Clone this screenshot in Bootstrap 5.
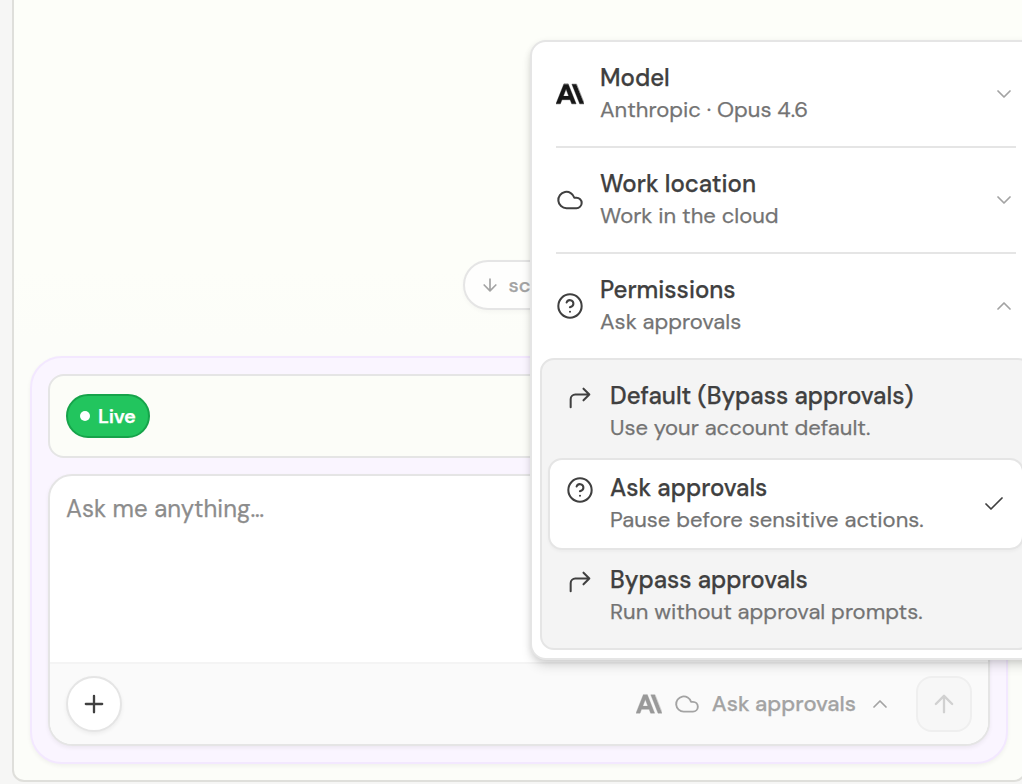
<!DOCTYPE html>
<html lang="en">
<head>
<meta charset="utf-8">
<title>Assistant</title>
<meta name="viewport" content="width=device-width, initial-scale=1">
<link href="https://cdn.jsdelivr.net/npm/bootstrap@5.3.0/dist/css/bootstrap.min.css" rel="stylesheet">
<style>
  body { font-family: "DM Sans", Inter, "Open Sans", sans-serif; background: #f6f6f5; color: #404040; height: 784px; -webkit-text-stroke: .25px currentColor; }
  .ico { fill: none; stroke: currentColor; stroke-width: 1.75; stroke-linecap: round; stroke-linejoin: round; flex: none; display: block; }
  .ico.logo { fill: #171717; stroke: #171717; stroke-width: .35; stroke-linejoin: miter; }
  .ico.logo-dim { fill: #999; stroke: #999; }
  .ico.bold-line { stroke-width: 2; }
  .stage { width: 1040px; height: 784px; padding: 0 14px 2px 12px; }
  .panel { border: 2px solid #dfdfdb; border-top: 0; border-radius: 0 0 12px 12px; background: linear-gradient(#fdfef9 270px, #fcfdf9 340px); padding: 0 16px 16px; }
  .scroll-pill { width: 113px; height: 50px; border: 2px solid #e5e5e5; color: #a3a3a3; padding-left: 15px; gap: 9px; margin-bottom: 46px; font-size: 20px; font-weight: 500; background: #fefefd; box-shadow: 0 2px 4px rgba(0,0,0,.03); }
  .composer { border: 2px solid #f3e8ff; background: #faf5ff; border-radius: 32px; padding: 16px; gap: 16px; box-shadow: 0 2px 4px rgba(0,0,0,.05); }
  .status { height: 84px; border: 2px solid #e5e5e5; border-radius: 16px; background: #fcfdf8; padding: 0 16px; }
  .live { height: 44px; width: 84px; border: 2px solid #16a34a; background: #22c55e; font-size: 20px; font-weight: 600; letter-spacing: -.3px; padding-left: 12px; gap: 8px; }
  .live-dot { width: 10px; height: 10px; }
  .prompt-box { height: 272px; border: 2px solid #e5e5e5; border-radius: 24px; box-shadow: 0 2px 4px rgba(0,0,0,.06); }
  .placeholder-text { font-size: 24px; line-height: 33px; letter-spacing: .04px; color: #8c8c8c; padding: 16px; }
  .toolbar { height: 82px; border-top: 2px solid #f4f4f4; background: #fafafa; padding: 0 16px; color: #a3a3a3; }
  .round-btn { width: 56px; height: 56px; border: 2px solid #e5e5e5; }
  .add-btn { box-shadow: 0 2px 4px rgba(0,0,0,.06); color: #404040; }
  .send-btn { border-radius: 16px; border-color: #efefef; background: #f7f7f7; color: #d1d1d1; margin-left: 24px; }
  .mode { font-size: 22px; font-weight: 500; gap: 12px; }
  .mode-label { padding-bottom: 2px; }
  .menu-pop { left: 530px; top: 40px; width: 512px; height: 620px; border: 2px solid #e5e5e5; border-radius: 16px; padding: 0 8px 8px; box-shadow: 0 8px 12px -2px rgba(0,0,0,.12), 0 2px 6px rgba(0,0,0,.10); }
  .menu-row { height: 104px; margin: 0 16px; gap: 16px; }
  .menu-row + .menu-row { height: 106px; border-top: 2px solid #e5e5e5; }
  .ttl { font-size: 24px; line-height: 32px; font-weight: 500; }
  .sub { font-size: 22px; line-height: 32px; color: #737373; }
  .chev { color: #a3a3a3; }
  .submenu { border: 2px solid #e5e5e5; border-radius: 14px; background: #f4f4f4; padding: 6px; height: 292px; }
  .choice { height: 92px; border: 2px solid transparent; border-radius: 14px; padding: 12px 16px; gap: 16px; }
  .choice.picked { background: #fff; border-color: #e5e5e5; box-shadow: 0 2px 3px rgba(0,0,0,.03); }
</style>
</head>
<body class="overflow-hidden position-relative">
<svg class="d-none">
  <symbol id="i-logo" viewBox="0 0 24 24"><path d="M17.3041 3.541h-3.6718l6.696 16.918H24Zm-10.6082 0L0 20.459h3.7442l1.3693-3.5527h7.0052l1.3693 3.5528h3.7442L10.5363 3.5409Zm-.3712 10.2232 2.2914-5.9456 2.2914 5.9456Z"/></symbol>
  <symbol id="i-cloud" viewBox="0 0 24 24"><path d="M17.5 19H9a7 7 0 1 1 6.71-9h1.79a4.5 4.5 0 1 1 0 9Z"/></symbol>
  <symbol id="i-help" viewBox="0 0 24 24"><circle cx="12" cy="12" r="10"/><path d="M9.09 9a3 3 0 0 1 5.83 1c0 2-3 3-3 3M12 17h.01"/></symbol>
  <symbol id="i-turn" viewBox="0 0 24 24"><path d="m15 14 5-5-5-5M20 9H8a4 4 0 0 0-4 4v7"/></symbol>
  <symbol id="i-down" viewBox="0 0 24 24"><path d="m6 9 6 6 6-6"/></symbol>
  <symbol id="i-up" viewBox="0 0 24 24"><path d="m18 15-6-6-6 6"/></symbol>
</svg>

<div class="stage d-flex">
  <main class="panel flex-grow-1 d-flex flex-column justify-content-end">
    <div class="scroll-pill rounded-pill d-flex align-items-center align-self-center">
      <svg class="ico bold-line" width="20" height="20" viewBox="0 0 24 24"><path d="M12 5v14M19 12l-7 7-7-7"/></svg><span>scroll</span>
    </div>
    <section class="composer d-flex flex-column">
      <div class="status d-flex align-items-center">
        <span class="live rounded-pill text-white d-flex align-items-center"><span class="live-dot rounded-circle bg-white"></span>Live</span>
      </div>
      <div class="prompt-box bg-white overflow-hidden d-flex flex-column">
        <div class="placeholder-text flex-grow-1">Ask me anything…</div>
        <div class="toolbar d-flex align-items-center">
          <span class="round-btn add-btn rounded-circle bg-white d-flex align-items-center justify-content-center">
            <svg class="ico bold-line" width="28" height="28" viewBox="0 0 24 24"><path d="M5 12h14M12 5v14"/></svg></span>
          <span class="mode ms-auto d-flex align-items-center">
            <svg class="ico logo logo-dim" width="26" height="26"><use href="#i-logo"/></svg>
            <svg class="ico" width="26" height="26"><use href="#i-cloud"/></svg>
            <span class="mode-label">Ask approvals</span>
            <svg class="ico" width="24" height="24"><use href="#i-up"/></svg>
          </span>
          <span class="round-btn send-btn d-flex align-items-center justify-content-center">
            <svg class="ico bold-line" width="28" height="28" viewBox="0 0 24 24"><path d="m5 12 7-7 7 7M12 19V5"/></svg></span>
        </div>
      </div>
    </section>
  </main>
</div>

<aside class="menu-pop position-absolute bg-white">
  <div class="menu-row d-flex align-items-center">
    <svg class="ico logo" width="28" height="28"><use href="#i-logo"/></svg>
    <div class="flex-grow-1"><div class="ttl">Model</div><div class="sub">Anthropic · Opus 4.6</div></div>
    <svg class="ico chev" width="24" height="24"><use href="#i-down"/></svg>
  </div>
  <div class="menu-row d-flex align-items-center">
    <svg class="ico" width="28" height="28"><use href="#i-cloud"/></svg>
    <div class="flex-grow-1"><div class="ttl">Work location</div><div class="sub">Work in the cloud</div></div>
    <svg class="ico chev" width="24" height="24"><use href="#i-down"/></svg>
  </div>
  <div class="menu-row d-flex align-items-center">
    <svg class="ico" width="28" height="28"><use href="#i-help"/></svg>
    <div class="flex-grow-1"><div class="ttl">Permissions</div><div class="sub">Ask approvals</div></div>
    <svg class="ico chev" width="24" height="24"><use href="#i-up"/></svg>
  </div>
  <div class="submenu">
    <div class="choice d-flex">
      <svg class="ico mt-1" width="28" height="28"><use href="#i-turn"/></svg>
      <div class="flex-grow-1"><div class="ttl">Default (Bypass approvals)</div><div class="sub">Use your account default.</div></div>
    </div>
    <div class="choice picked d-flex">
      <svg class="ico mt-1" width="28" height="28"><use href="#i-help"/></svg>
      <div class="flex-grow-1"><div class="ttl">Ask approvals</div><div class="sub">Pause before sensitive actions.</div></div>
      <svg class="ico align-self-center" width="24" height="24" viewBox="0 0 24 24"><path d="M20 6 9 17l-5-5"/></svg>
    </div>
    <div class="choice d-flex">
      <svg class="ico mt-1" width="28" height="28"><use href="#i-turn"/></svg>
      <div class="flex-grow-1"><div class="ttl">Bypass approvals</div><div class="sub">Run without approval prompts.</div></div>
    </div>
  </div>
</aside>
<script src="https://cdn.jsdelivr.net/npm/bootstrap@5.3.0/dist/js/bootstrap.bundle.min.js"></script>
</body>
</html>
